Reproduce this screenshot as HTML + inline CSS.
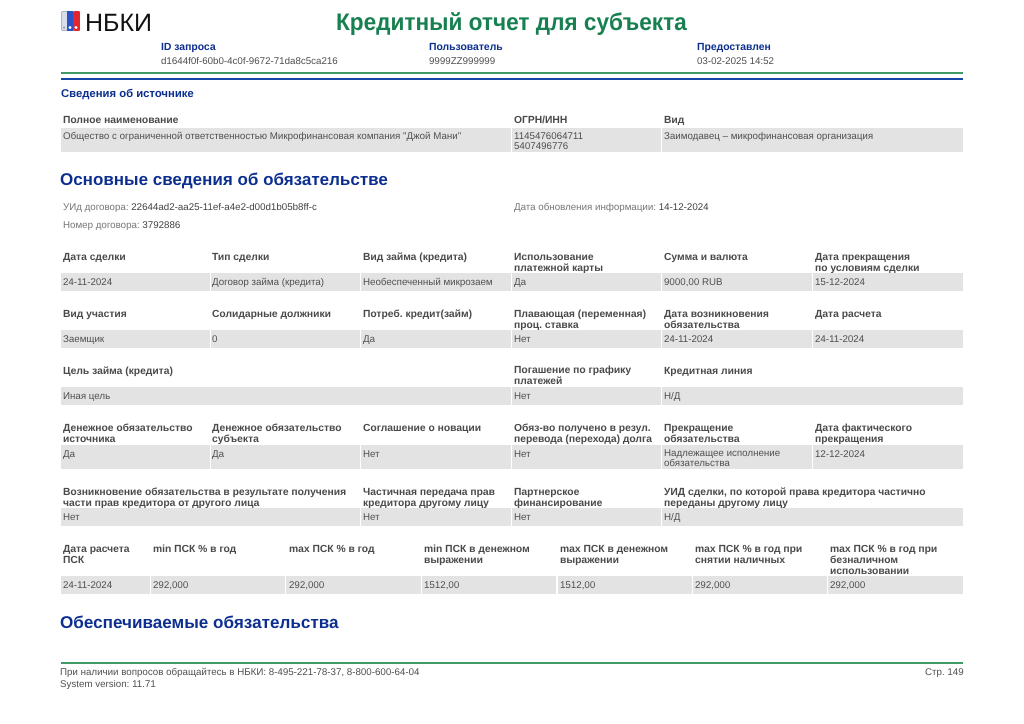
<!DOCTYPE html>
<html><head><meta charset="utf-8">
<style>
html,body{margin:0;padding:0;background:#fff;}
#p{position:relative;width:1024px;height:724px;overflow:hidden;background:#fff;font-family:"Liberation Sans",sans-serif;text-rendering:geometricPrecision;}
#p div{position:absolute;white-space:nowrap;}
.h{font-weight:bold;font-size:10.3px;line-height:11px;color:#4a4a4a;transform:translateY(1px);}
.t{font-size:9.75px;line-height:10px;color:#505050;transform:translateY(1px);}
.c{background:#e3e3e3;}
.b{font-weight:bold;color:#0c2f8f;}
.l{font-size:9.75px;line-height:11px;color:#777;transform:translateY(1px);}
.l span{color:#444;}
</style></head><body><div id="p">
<svg style="position:absolute;left:61px;top:11px" width="19" height="20" viewBox="0 0 19 20"><rect x="0.5" y="0.5" width="6" height="19" rx="1.5" fill="#d8dfe8" stroke="#aab4c4"/><rect x="6" y="0" width="6" height="20" fill="#2b52c8"/><rect x="12" y="0" width="7" height="20" rx="1.5" fill="#e2262e"/><circle cx="9" cy="16.5" r="1.4" fill="#fff"/><circle cx="15" cy="16.5" r="1.4" fill="#fff"/><circle cx="3" cy="16.5" r="1" fill="#8894a8"/></svg>
<div style="left:85px;top:8px;font-size:25px;line-height:30px;color:#111;">НБКИ</div>
<div style="left:336px;top:8px;font-size:24px;line-height:30px;font-weight:bold;color:#178050;transform:scaleX(.942);transform-origin:left top;">Кредитный отчет для субъекта</div>

<div class="b" style="left:161px;top:42px;font-size:10.4px;line-height:11px;">ID запроса</div>
<div class="b" style="left:429px;top:42px;font-size:10.4px;line-height:11px;">Пользователь</div>
<div class="b" style="left:697px;top:42px;font-size:10.4px;line-height:11px;">Предоставлен</div>
<div class="t" style="left:161px;top:56px;">d1644f0f-60b0-4c0f-9672-71da8c5ca216</div>
<div class="t" style="left:429px;top:56px;">9999ZZ999999</div>
<div class="t" style="left:697px;top:56px;">03-02-2025 14:52</div>
<div style="left:61px;top:72px;width:902px;height:2px;background:#3f9a68;"></div>
<div style="left:61px;top:78px;width:902px;height:2px;background:#1746a5;"></div>

<div class="b" style="left:61px;top:87px;font-size:11.3px;line-height:14px;">Сведения об источнике</div>
<div class="h" style="left:63px;top:114px;">Полное наименование</div>
<div class="h" style="left:514px;top:114px;">ОГРН/ИНН</div>
<div class="h" style="left:664px;top:114px;">Вид</div>
<div class="c" style="left:61px;top:128px;width:450px;height:24px;"></div>
<div class="c" style="left:512px;top:128px;width:149px;height:24px;"></div>
<div class="c" style="left:662px;top:128px;width:301px;height:24px;"></div>
<div class="t" style="left:63px;top:131px;">Общество с ограниченной ответственностью Микрофинансовая компания "Джой Мани"</div>
<div class="t" style="left:514px;top:131px;">1145476064711<br>5407496776</div>
<div class="t" style="left:664px;top:131px;">Заимодавец – микрофинансовая организация</div>

<div class="b" style="left:60px;top:169px;font-size:17px;line-height:22px;">Основные сведения об обязательстве</div>
<div class="l" style="left:63px;top:201px;">УИд договора: <span>22644ad2-aa25-11ef-a4e2-d00d1b05b8ff-c</span></div>
<div class="l" style="left:514px;top:201px;">Дата обновления информации: <span>14-12-2024</span></div>
<div class="l" style="left:63px;top:219px;">Номер договора: <span>3792886</span></div>

<div class="h" style="left:63px;top:251px;">Дата сделки</div>
<div class="h" style="left:212px;top:251px;">Тип сделки</div>
<div class="h" style="left:363px;top:251px;">Вид займа (кредита)</div>
<div class="h" style="left:514px;top:251px;">Использование<br>платежной карты</div>
<div class="h" style="left:664px;top:251px;">Сумма и валюта</div>
<div class="h" style="left:815px;top:251px;">Дата прекращения<br>по условиям сделки</div>
<div class="c" style="left:61px;top:273px;width:149px;height:18px;"></div>
<div class="c" style="left:211px;top:273px;width:149px;height:18px;"></div>
<div class="c" style="left:361px;top:273px;width:150px;height:18px;"></div>
<div class="c" style="left:512px;top:273px;width:149px;height:18px;"></div>
<div class="c" style="left:662px;top:273px;width:150px;height:18px;"></div>
<div class="c" style="left:813px;top:273px;width:150px;height:18px;"></div>
<div class="t" style="left:63px;top:277px;">24-11-2024</div>
<div class="t" style="left:212px;top:277px;">Договор займа (кредита)</div>
<div class="t" style="left:363px;top:277px;">Необеспеченный микрозаем</div>
<div class="t" style="left:514px;top:277px;">Да</div>
<div class="t" style="left:664px;top:277px;">9000,00 RUB</div>
<div class="t" style="left:815px;top:277px;">15-12-2024</div>

<div class="h" style="left:63px;top:308px;">Вид участия</div>
<div class="h" style="left:212px;top:308px;">Солидарные должники</div>
<div class="h" style="left:363px;top:308px;">Потреб. кредит(займ)</div>
<div class="h" style="left:514px;top:308px;">Плавающая (переменная)<br>проц. ставка</div>
<div class="h" style="left:664px;top:308px;">Дата возникновения<br>обязательства</div>
<div class="h" style="left:815px;top:308px;">Дата расчета</div>
<div class="c" style="left:61px;top:330px;width:149px;height:18px;"></div>
<div class="c" style="left:211px;top:330px;width:149px;height:18px;"></div>
<div class="c" style="left:361px;top:330px;width:150px;height:18px;"></div>
<div class="c" style="left:512px;top:330px;width:149px;height:18px;"></div>
<div class="c" style="left:662px;top:330px;width:150px;height:18px;"></div>
<div class="c" style="left:813px;top:330px;width:150px;height:18px;"></div>
<div class="t" style="left:63px;top:334px;">Заемщик</div>
<div class="t" style="left:212px;top:334px;">0</div>
<div class="t" style="left:363px;top:334px;">Да</div>
<div class="t" style="left:514px;top:334px;">Нет</div>
<div class="t" style="left:664px;top:334px;">24-11-2024</div>
<div class="t" style="left:815px;top:334px;">24-11-2024</div>

<div class="h" style="left:63px;top:365px;">Цель займа (кредита)</div>
<div class="h" style="left:514px;top:364px;">Погашение по графику<br>платежей</div>
<div class="h" style="left:664px;top:365px;">Кредитная линия</div>
<div class="c" style="left:61px;top:387px;width:450px;height:18px;"></div>
<div class="c" style="left:512px;top:387px;width:149px;height:18px;"></div>
<div class="c" style="left:662px;top:387px;width:301px;height:18px;"></div>
<div class="t" style="left:63px;top:391px;">Иная цель</div>
<div class="t" style="left:514px;top:391px;">Нет</div>
<div class="t" style="left:664px;top:391px;">Н/Д</div>

<div class="h" style="left:63px;top:422px;">Денежное обязательство<br>источника</div>
<div class="h" style="left:212px;top:422px;">Денежное обязательство<br>субъекта</div>
<div class="h" style="left:363px;top:422px;">Соглашение о новации</div>
<div class="h" style="left:514px;top:422px;">Обяз-во получено в резул.<br>перевода (перехода) долга</div>
<div class="h" style="left:664px;top:422px;">Прекращение<br>обязательства</div>
<div class="h" style="left:815px;top:422px;">Дата фактического<br>прекращения</div>
<div class="c" style="left:61px;top:445px;width:149px;height:24px;"></div>
<div class="c" style="left:211px;top:445px;width:149px;height:24px;"></div>
<div class="c" style="left:361px;top:445px;width:150px;height:24px;"></div>
<div class="c" style="left:512px;top:445px;width:149px;height:24px;"></div>
<div class="c" style="left:662px;top:445px;width:150px;height:24px;"></div>
<div class="c" style="left:813px;top:445px;width:150px;height:24px;"></div>
<div class="t" style="left:63px;top:449px;">Да</div>
<div class="t" style="left:212px;top:449px;">Да</div>
<div class="t" style="left:363px;top:449px;">Нет</div>
<div class="t" style="left:514px;top:449px;">Нет</div>
<div class="t" style="left:664px;top:448px;">Надлежащее исполнение<br>обязательства</div>
<div class="t" style="left:815px;top:449px;">12-12-2024</div>

<div class="h" style="left:63px;top:486px;">Возникновение обязательства в результате получения<br>части прав кредитора от другого лица</div>
<div class="h" style="left:363px;top:486px;">Частичная передача прав<br>кредитора другому лицу</div>
<div class="h" style="left:514px;top:486px;">Партнерское<br>финансирование</div>
<div class="h" style="left:664px;top:486px;">УИД сделки, по которой права кредитора частично<br>переданы другому лицу</div>
<div class="c" style="left:61px;top:508px;width:299px;height:18px;"></div>
<div class="c" style="left:361px;top:508px;width:150px;height:18px;"></div>
<div class="c" style="left:512px;top:508px;width:149px;height:18px;"></div>
<div class="c" style="left:662px;top:508px;width:301px;height:18px;"></div>
<div class="t" style="left:63px;top:512px;">Нет</div>
<div class="t" style="left:363px;top:512px;">Нет</div>
<div class="t" style="left:514px;top:512px;">Нет</div>
<div class="t" style="left:664px;top:512px;">Н/Д</div>

<div class="h" style="left:63px;top:543px;">Дата расчета<br>ПСК</div>
<div class="h" style="left:153px;top:543px;">min ПСК % в год</div>
<div class="h" style="left:289px;top:543px;">max ПСК % в год</div>
<div class="h" style="left:424px;top:543px;">min ПСК в денежном<br>выражении</div>
<div class="h" style="left:560px;top:543px;">max ПСК в денежном<br>выражении</div>
<div class="h" style="left:695px;top:543px;">max ПСК % в год при<br>снятии наличных</div>
<div class="h" style="left:830px;top:543px;">max ПСК % в год при<br>безналичном<br>использовании</div>
<div class="c" style="left:61px;top:576px;width:89px;height:18px;"></div>
<div class="c" style="left:151px;top:576px;width:134px;height:18px;"></div>
<div class="c" style="left:286px;top:576px;width:135px;height:18px;"></div>
<div class="c" style="left:422px;top:576px;width:134px;height:18px;"></div>
<div class="c" style="left:558px;top:576px;width:134px;height:18px;"></div>
<div class="c" style="left:693px;top:576px;width:134px;height:18px;"></div>
<div class="c" style="left:828px;top:576px;width:135px;height:18px;"></div>
<div class="t" style="left:63px;top:580px;">24-11-2024</div>
<div class="t" style="left:153px;top:580px;">292,000</div>
<div class="t" style="left:289px;top:580px;">292,000</div>
<div class="t" style="left:424px;top:580px;">1512,00</div>
<div class="t" style="left:560px;top:580px;">1512,00</div>
<div class="t" style="left:695px;top:580px;">292,000</div>
<div class="t" style="left:830px;top:580px;">292,000</div>

<div class="b" style="left:60px;top:612px;font-size:17.1px;line-height:22px;">Обеспечиваемые обязательства</div>
<div style="left:61px;top:662px;width:902px;height:2px;background:#3f9a68;"></div>
<div class="t" style="left:60px;top:666px;line-height:12px;">При наличии вопросов обращайтесь в НБКИ: 8-495-221-78-37, 8-800-600-64-04</div>
<div class="t" style="left:60px;top:678px;line-height:12px;">System version: 11.71</div>
<div class="t" style="left:925px;top:666px;line-height:12px;">Стр. 149</div>
</div></body></html>
